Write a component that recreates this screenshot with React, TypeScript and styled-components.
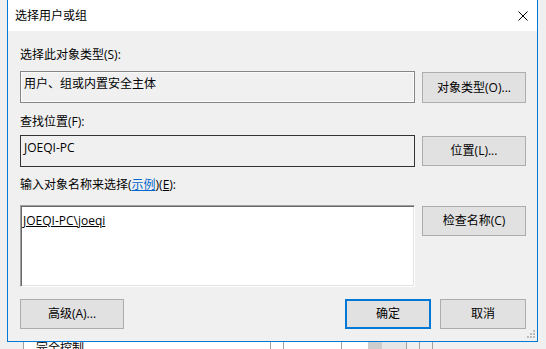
import React from "react";
import styled, { createGlobalStyle, css } from "styled-components";

const GlobalStyle = createGlobalStyle`
  html, body { margin: 0; padding: 0; background: #f0f0f0; }
  body {
    font-family: "Open Sans", "Noto Sans CJK SC", sans-serif;
    font-size: 12px;
    color: #000;
    overflow: hidden;
  }
  * { box-sizing: border-box; }
`;

const Page = styled.div`
  width: 546px;
  height: 349px;
  overflow: hidden;
  background: #f0f0f0;
  display: flex;
  flex-direction: column;
`;

const Dialog = styled.div`
  position: relative;
  margin-left: 7px;
  width: 531px;
  height: 342px;
  flex: none;
  background: #f0f0f0;
  border: 1px solid #0078d7;
  border-top: none;
  display: flex;
  flex-direction: column;
`;

const TitleBar = styled.div`
  height: 31px;
  flex: none;
  background: #fff;
  display: flex;
  align-items: center;
  justify-content: space-between;
  padding-left: 7px;
`;

const Title = styled.span`
  font-size: 12px;
  line-height: 16px;
  margin-top: 1px;
`;

const CloseButton = styled.div`
  width: 28px;
  height: 31px;
  display: flex;
  align-items: center;
  justify-content: center;
`;

const Body = styled.div`
  flex: 1;
  display: flex;
  flex-direction: column;
  padding: 0 11px 0 12px;
`;

const Label = styled.div<{ $mt: number }>`
  margin-top: ${(p) => p.$mt}px;
  line-height: 16px;
  height: 16px;
  white-space: nowrap;
`;

const Link = styled.span`
  color: #0066cc;
  text-decoration: underline;
`;

const Mnemonic = styled.span`
  text-decoration: underline;
`;

const FieldRow = styled.div<{ $mt: number }>`
  margin-top: ${(p) => p.$mt}px;
  display: grid;
  grid-template-columns: 395px 104px;
  column-gap: 7px;
  align-items: start;
`;

const Box = styled.div<{ $variant: "soft" | "dark" | "sunken"; $h: number }>`
  height: ${(p) => p.$h}px;
  line-height: 16px;
  white-space: nowrap;
  overflow: hidden;
  ${(p) =>
    p.$variant === "soft"
      ? css`
          background: #f0f0f0;
          border: 1px solid #868686;
          box-shadow: inset 0 0 0 1px #fbfbfb;
          padding: 4px 3px;
        `
      : p.$variant === "dark"
      ? css`
          background: #f0f0f0;
          border: 1px solid #333333;
          padding: 4px 3px;
        `
      : css`
          background: #fff;
          border: 1px solid;
          border-color: #a0a0a0 #fff #fff #a0a0a0;
          box-shadow: inset 1px 1px 0 #696969, inset -1px -1px 0 #e3e3e3;
          padding: 7px 1px 0 2px;
        `}
`;

const Underlined = styled.span`
  text-decoration: underline;
`;

const Button = styled.div<{ $w?: number; $h: number; $mt?: number; $default?: boolean }>`
  width: ${(p) => (p.$w ? `${p.$w}px` : "auto")};
  height: ${(p) => p.$h}px;
  margin-top: ${(p) => p.$mt ?? 0}px;
  background: #e1e1e1;
  border: ${(p) => (p.$default ? "2px solid #0078d7" : "1px solid #adadad")};
  display: flex;
  align-items: center;
  justify-content: center;
  line-height: 16px;
  white-space: nowrap;
`;

const Footer = styled.div`
  margin-top: 12px;
  display: flex;
  align-items: center;
`;

const Spacer = styled.div`
  flex: 1;
`;

const FooterGap = styled.div`
  width: 9px;
`;

const Grip = styled.div`
  position: absolute;
  right: 2px;
  bottom: 3px;
  width: 8px;
  height: 8px;
  display: grid;
  grid-template-columns: repeat(3, 2px);
  grid-template-rows: repeat(3, 2px);
  gap: 1px;
`;

const Dot = styled.span<{ $on: boolean }>`
  background: ${(p) => (p.$on ? "#bcbcbc" : "transparent")};
`;

const BackStrip = styled.div`
  height: 7px;
  flex: none;
  display: flex;
  overflow: hidden;
  background: #f0f0f0;
`;

const BackCell = styled.div<{ $w: number; $bg?: string; $line?: boolean }>`
  width: ${(p) => p.$w}px;
  flex: none;
  height: 7px;
  overflow: hidden;
  background: ${(p) => p.$bg ?? "#fff"};
  border-left: ${(p) => (p.$line ? "1px solid #a0a0a0" : "none")};
  padding-left: 12px;
  line-height: 16px;
  white-space: nowrap;
`;

const BackText = styled.div`
  line-height: 16px;
  margin-top: -2px;
`;

const CloseIcon = () => (
  <svg width="10" height="10" viewBox="0 0 10 10">
    <path d="M0.5 0.5 L9.5 9.5 M9.5 0.5 L0.5 9.5" stroke="#000" strokeWidth="1" fill="none" />
  </svg>
);

const gripMap = [false, false, true, false, true, true, true, true, true];

export default function App() {
  return (
    <>
      <GlobalStyle />
      <Page>
        <Dialog>
          <TitleBar>
            <Title>选择用户或组</Title>
            <CloseButton>
              <CloseIcon />
            </CloseButton>
          </TitleBar>
          <Body>
            <Label $mt={16}>选择此对象类型(S):</Label>
            <FieldRow $mt={8}>
              <Box $variant="soft" $h={32}>用户、组或内置安全主体</Box>
              <Button $h={31} $mt={1}>对象类型(O)...</Button>
            </FieldRow>
            <Label $mt={11}>查找位置(F):</Label>
            <FieldRow $mt={5}>
              <Box $variant="dark" $h={32}>JOEQI-PC</Box>
              <Button $h={30} $mt={1}>位置(L)...</Button>
            </FieldRow>
            <Label $mt={10}>
              输入对象名称来选择(<Link>示例</Link>)(<Mnemonic>E</Mnemonic>):
            </Label>
            <FieldRow $mt={12}>
              <Box $variant="sunken" $h={82}>
                <Underlined>JOEQI-PC\joeqi</Underlined>
              </Box>
              <Button $h={30} $mt={1}>检查名称(C)</Button>
            </FieldRow>
            <Footer>
              <Button $w={104} $h={30}>高级(A)...</Button>
              <Spacer />
              <Button $w={86} $h={30} $default>确定</Button>
              <FooterGap />
              <Button $w={86} $h={30}>取消</Button>
            </Footer>
          </Body>
          <Grip>
            {gripMap.map((on, i) => (
              <Dot key={i} $on={on} />
            ))}
          </Grip>
        </Dialog>
        <BackStrip>
          <BackCell $w={23} $bg="#f0f0f0" />
          <BackCell $w={247} $line>
            <BackText>完全控制</BackText>
          </BackCell>
          <BackCell $w={12} $line />
          <BackCell $w={58} $line />
          <BackCell $w={27} $line />
          <BackCell $w={14} $bg="#cdcdcd" />
          <BackCell $w={24} $bg="#e6e6e6" />
          <BackCell $w={10} $line $bg="#f0f0f0" />
          <BackCell $w={7} $line $bg="#f0f0f0" />
          <BackCell $w={120} $line $bg="#f0f0f0" />
        </BackStrip>
      </Page>
    </>
  );
}
